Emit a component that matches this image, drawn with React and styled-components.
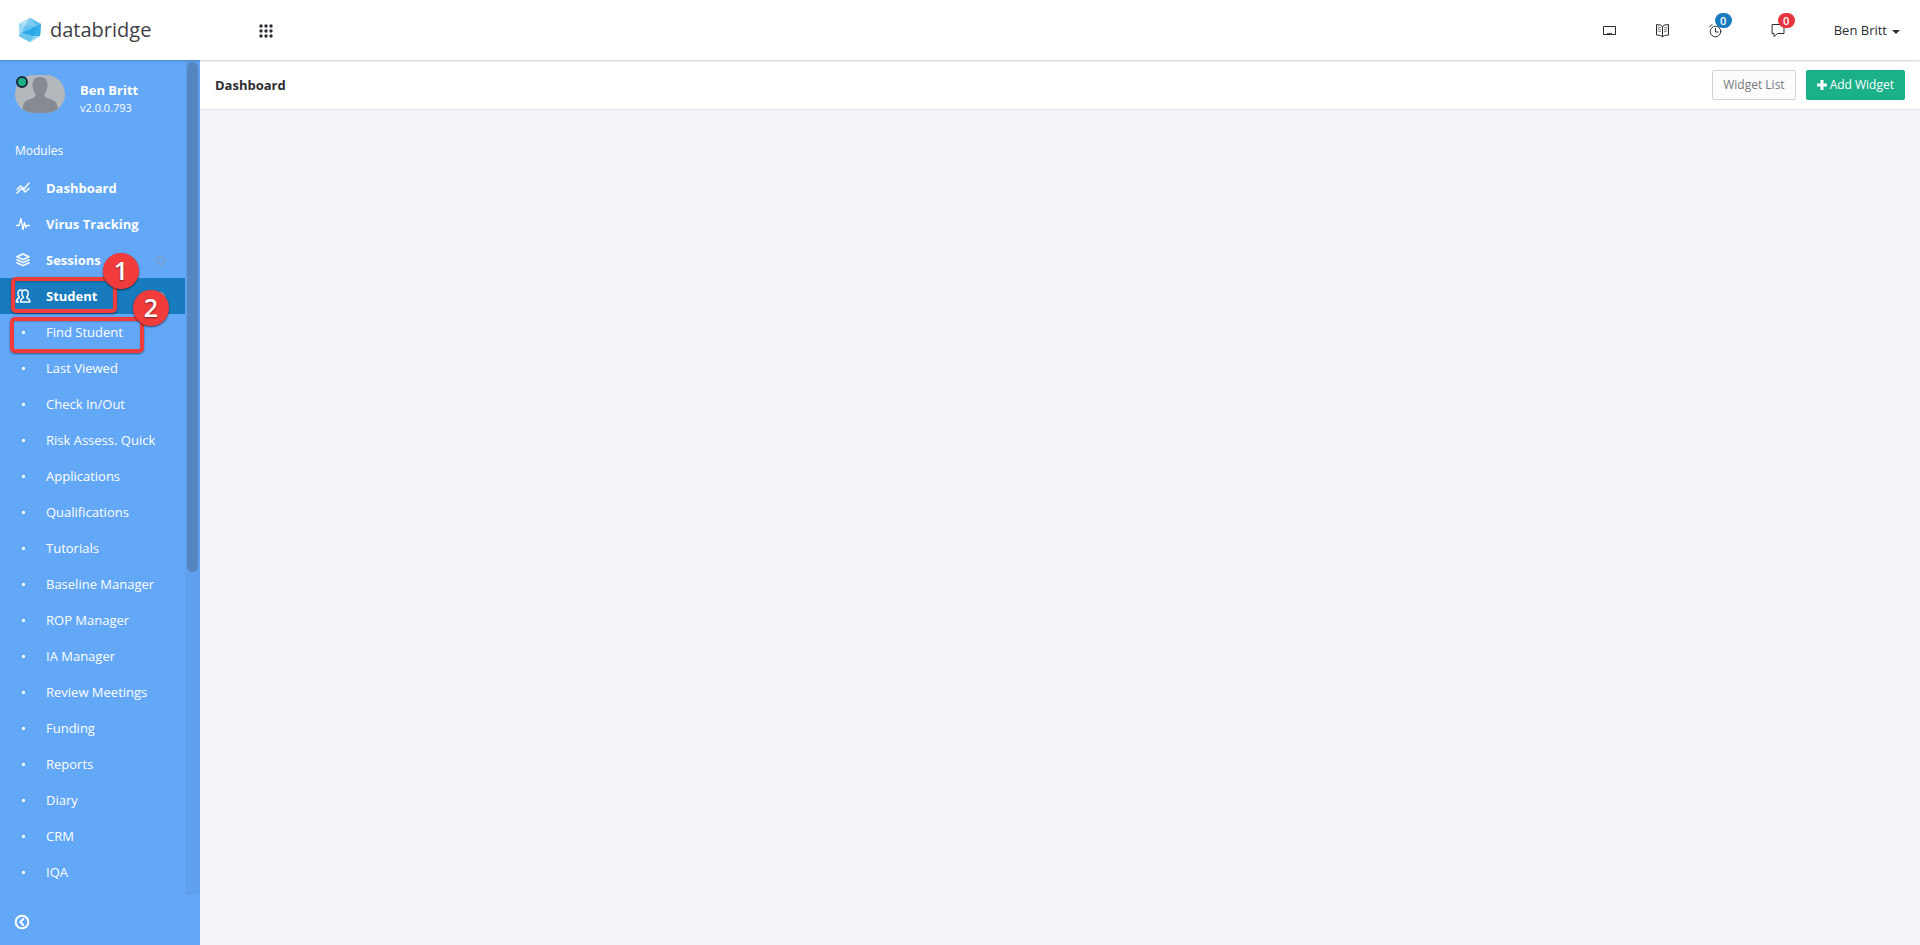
import styled, { createGlobalStyle, css } from "styled-components"

const GlobalStyle = createGlobalStyle`
    * {
        box-sizing: border-box;
    }
    body {
        margin: 0;
        background: #f2f4f8;
        color: #2c2d33;
        font-family: "Open Sans", "Noto Sans", sans-serif;
        font-size: 13px;
        line-height: 20px;
    }
    a {
        color: inherit;
        text-decoration: none;
    }
    button {
        font-family: inherit;
        cursor: pointer;
    }
`

const Page = styled.div`
    height: 100vh;
    display: flex;
    flex-direction: column;
`

const Header = styled.header`
    height: 60px;
    flex-shrink: 0;
    display: flex;
    align-items: center;
    padding: 0 20px 0 18px;
    background: white;
    position: relative;
    z-index: 2;
    box-shadow: 0 1px 2px rgba(0, 0, 0, 0.2);
`

const Brand = styled.a`
    display: flex;
    align-items: center;
    gap: 8px;
    width: 232px;
    font-size: 20px;
    line-height: 28px;
    color: #3f4047;
`

const IconButton = styled.button`
    display: flex;
    align-items: center;
    position: relative;
    width: ${({ $counted }) => $counted ? "42px" : "32px"};
    height: 32px;
    padding: 0 8px;
    border: 0;
    background: none;
    color: #2c2d33;
`

const Tools = styled.div`
    display: flex;
    align-items: center;
    gap: 21px;
    margin-left: auto;
`

const Count = styled.span`
    position: absolute;
    top: -1px;
    left: 16px;
    width: 17px;
    height: 15px;
    border-radius: 8px;
    background: ${({ $color }) => $color};
    color: white;
    font-size: 11px;
    line-height: 15px;
    font-weight: 600;
    text-align: center;
`

const UserMenu = styled.button`
    display: flex;
    align-items: center;
    gap: 5px;
    margin-left: 9px;
    padding: 0;
    border: 0;
    background: none;
    color: #2c2d33;
    font-size: 13px;
    line-height: 20px;
`

const Caret = styled.span`
    margin-top: 3px;
    border: 4px solid transparent;
    border-top-color: currentColor;
    border-bottom: 0;
`

const Body = styled.div`
    flex: 1;
    min-height: 0;
    display: flex;
`

const Sidebar = styled.aside`
    width: 200px;
    flex-shrink: 0;
    display: flex;
    flex-direction: column;
    background: #63a7f7;
    color: white;
`

const Scroller = styled.div`
    flex: 1;
    min-height: 0;
    display: flex;
`

const ScrollContent = styled.div`
    flex: 1;
    overflow: hidden;
`

const Track = styled.div`
    display: flex;
    flex-direction: column;
    width: 15px;
    padding: 2px;
    background: #5fa1ee;

    &::after {
        content: "";
        flex: 321;
    }
`

const Thumb = styled.div`
    flex: 510;
    border-radius: 6px;
    background: #5485be;
`

const Profile = styled.div`
    display: flex;
    gap: 15px;
    padding: 15px 15px 0;
    height: 81px;
`

const Avatar = styled.div`
    position: relative;
    width: 50px;
    height: 38px;

    svg {
        display: block;
        border-radius: 19px;
    }
`

const Online = styled.span`
    position: absolute;
    top: 1px;
    left: 1px;
    width: 12px;
    height: 12px;
    border: 2px solid #1c2833;
    border-radius: 50%;
    background: #1ab088;
`

const ProfileText = styled.div`
    padding-top: 6px;
    line-height: 18px;
`

const Name = styled.div`
    font-weight: 700;
`

const Version = styled.div`
    font-size: 11px;
`

const MenuTitle = styled.div`
    padding: 0 15px 9px;
    font-size: 12px;
`

const Menu = styled.ul`
    margin: 0;
    padding: 0;
    list-style: none;
`

const Item = styled.li`
    position: relative;
    ${({ $active }) => $active && css`
        background: #187bbd;
    `}
`

const ItemLink = styled.a`
    display: flex;
    align-items: center;
    height: 36px;
    padding: 0 20px 0 15px;
    font-weight: ${({ $bold }) => $bold ? 700 : 400};
`

const ItemIcon = styled.span`
    display: flex;
    justify-content: center;
    width: 16px;
    margin-right: 15px;
`

const Dot = styled.span`
    width: 3px;
    height: 3px;
    border-radius: 1px;
    background: white;
`

const Ring = styled.span`
    width: 9px;
    height: 9px;
    flex-shrink: 0;
    margin-left: auto;
    border: 1px solid #8a97a8;
    border-radius: 50%;
    background: ${({ $filled }) => $filled ? "#8a97a8" : "none"};
`

const Outline = styled.span`
    position: absolute;
    top: ${({ $top }) => $top}px;
    left: ${({ $left }) => $left}px;
    width: ${({ $width }) => $width}px;
    height: 36px;
    border: 4px solid #f23c3c;
    border-radius: 5px;
    box-shadow: 0 1px 2px rgba(0, 0, 0, 0.5), inset 0 1px 1px rgba(0, 0, 0, 0.2);
    pointer-events: none;
`

const Step = styled.span`
    position: absolute;
    z-index: 1;
    top: ${({ $top }) => $top}px;
    left: ${({ $left }) => $left}px;
    width: 36px;
    height: 36px;
    border-radius: 50%;
    background: #f23c3c;
    box-shadow: 0 1px 2px rgba(0, 0, 0, 0.6);
    color: white;
    font-size: 25px;
    line-height: 35px;
    font-weight: 600;
    text-align: center;
    text-shadow: 0 1px 2px rgba(0, 0, 0, 0.5);
    pointer-events: none;
`

const SidebarFooter = styled.div`
    height: 50px;
    padding: 11px 6px;
    button {
        color: white;
    }
`

const Main = styled.main`
    flex: 1;
`

const TitleBar = styled.div`
    display: flex;
    align-items: center;
    gap: 10px;
    height: 50px;
    padding: 1px 15px 0;
    background: white;
    border-bottom: 1px solid #e0e3e8;
`

const Title = styled.h1`
    flex: 1;
    margin: 0;
    font-size: 13px;
    line-height: 20px;
    font-weight: 700;
`

const Button = styled.button`
    display: flex;
    align-items: center;
    gap: 3px;
    height: 30px;
    padding: 0 10px;
    border: 1px solid ${({ $primary }) => $primary ? "#1ab088" : "#ced6dd"};
    border-radius: 2px;
    background: ${({ $primary }) => $primary ? "#1ab088" : "#fcfcfc"};
    color: ${({ $primary }) => $primary ? "white" : "#76797f"};
    font-size: 12px;
    line-height: 18px;
`

const Svg = ({ size = 16, box = 16, children, ...rest }) => (
    <svg width={size} height={size} viewBox={`0 0 ${box} ${box}`} fill="none" stroke="currentColor" strokeLinecap="round" strokeLinejoin="round" aria-hidden="true" {...rest}>
        {children}
    </svg>
)

const Logo = () => (
    <svg width="24" height="26" viewBox="0 0 24 26" aria-hidden="true">
        <path d="M12 1 23 7 22 19 12 25 1 19 1 7Z" fill="#43b4ec" />
        <path d="M12 1 1 7 7 9Z" fill="#b5e2f9" />
        <path d="M12 1 7 9 19 9Z" fill="#7dcdf3" />
        <path d="M12 1 23 7 19 9Z" fill="#5fc0ef" />
        <path d="M1 7 7 9 4 16 1 19Z" fill="#9bd8f5" />
        <path d="M7 9 19 9 4 16Z" fill="#64c2ef" />
        <path d="M19 9 4 16 16 19Z" fill="#28a8e6" />
        <path d="M19 9 23 7 22 19 16 19Z" fill="#37aee8" />
        <path d="M4 16 16 19 12 25 1 19Z" fill="#69c4ef" />
        <path d="M16 19 22 19 12 25Z" fill="#a1daf5" />
    </svg>
)

const GridIcon = () => (
    <Svg stroke="none" fill="currentColor">
        {[4, 9, 14].map((y) => [3, 8, 13].map((x) => <circle key={`${x}-${y}`} cx={x} cy={y} r="1.7" />))}
    </Svg>
)

const ScreenIcon = () => (
    <Svg>
        <path d="M2.500 4.500h12v8h-12zM2 12.500h13M6 11.700h5" strokeLinecap="butt" />
    </Svg>
)

const BookIcon = () => (
    <Svg>
        <path d="M8.500 4.500 6.500 3 2.500 2.500v10.500l4 .5 2 1.300 2-1.300 4-.5V2.500l-4 .5ZM8.500 4.500v10" />
        <path d="M4 5 6.700 5.700M4 7 6.700 7.700M4 9 6.700 9.700M13 5 10.300 5.700M13 7 10.300 7.700M13 9 10.300 9.700" strokeWidth=".6" />
    </Svg>
)

const ClockIcon = () => (
    <Svg>
        <circle cx="8.500" cy="9.500" r="5.300" />
        <path d="M8.500 6.500v3.500h2.500M2.500 5 5 2.500M12 2.500 14.500 5" />
    </Svg>
)

const ChatIcon = () => (
    <Svg>
        <path d="M2.500 2.500h11.500v9H7.500l-3.500 3v-3H2.500z" />
    </Svg>
)

// two lines, the upper one jagged and crossing the lower
const TrendIcon = () => (
    <Svg>
        <path d="M2 9.500 5.500 6l2 1.500L9 9l5-6M2 13l5-5M7 8l3 4 4-3.500" strokeWidth="1.500" />
    </Svg>
)

const PulseIcon = () => (
    <Svg>
        <path d="M1.500 9.500H4L6 2.500l2 11L9.500 6.500l1.500 5 1-2h2.500" strokeWidth="1.300" />
    </Svg>
)

const LayersIcon = () => (
    <Svg>
        <path d="M8 2 14 4.800 8 7.600 2 4.800ZM2 7.800l6 2.800 6-2.800M2 10.800l6 2.800 6-2.800" strokeWidth="1.600" />
    </Svg>
)

const PeopleIcon = () => (
    <Svg>
        <path d="M10 2c2.200 0 3.200 1.600 3.200 3.500 0 1.400-.6 2.500-1.300 3.200v1.200c1.700.6 3 1.500 3 4.100H5.500c0-2.600 1.100-3.500 2.700-4.100V8.700C7.500 8 6.900 6.900 6.900 5.500 6.900 3.600 7.900 2 10 2Z" strokeWidth="1.500" />
        <path d="M6.500 2C4 1.500 2.800 3.500 3 5.500c0 1.400.5 2.500 1.200 3.200v1C2.500 10.400 1.400 11.400 1.400 14h2" strokeWidth="1.500" />
    </Svg>
)

const PlusIcon = () => (
    <Svg size={10} box={10}>
        <path d="M5 0v10M0 5h10" strokeWidth="3" strokeLinecap="butt" />
    </Svg>
)

const CollapseIcon = () => (
    <Svg>
        <circle cx="8" cy="8" r="6.300" strokeWidth="2" />
        <path d="M9.300 5 6.300 8l3 3" strokeWidth="2" />
    </Svg>
)

const modules = [
    { label: "Dashboard", icon: <TrendIcon /> },
    { label: "Virus Tracking", icon: <PulseIcon /> },
    { label: "Sessions", icon: <LayersIcon />, ring: true },
    { label: "Student", icon: <PeopleIcon />, ring: true, active: true, mark: { step: 1, box: [-1, 11, 106], badge: [-25, 103] } },
    { label: "Find Student", mark: { step: 2, box: [3, 10, 134], badge: [-24, 133] } },
    ...["Last Viewed", "Check In/Out", "Risk Assess. Quick", "Applications", "Qualifications", "Tutorials", "Baseline Manager", "ROP Manager", "IA Manager", "Review Meetings", "Funding", "Reports", "Diary", "CRM", "IQA"].map((label) => ({ label })),
]

const MenuItem = ({ item }) => (
    <Item $active={item.active}>
        <ItemLink href="#" $bold={!!item.icon}>
            <ItemIcon>{item.icon || <Dot />}</ItemIcon>
            {item.label}
            {item.ring && <Ring $filled={item.active} />}
        </ItemLink>
        {item.mark && (
            <>
                <Outline $top={item.mark.box[0]} $left={item.mark.box[1]} $width={item.mark.box[2]} />
                <Step $top={item.mark.badge[0]} $left={item.mark.badge[1]}>{item.mark.step}</Step>
            </>
        )}
    </Item>
)

export default function App() {
    return (
        <Page>
            <GlobalStyle />
            <Header>
                <Brand href="#"><Logo />databridge</Brand>
                <IconButton aria-label="Apps"><GridIcon /></IconButton>
                <Tools>
                    <IconButton aria-label="Screen"><ScreenIcon /></IconButton>
                    <IconButton aria-label="Guide"><BookIcon /></IconButton>
                    <IconButton $counted aria-label="Reminders"><ClockIcon /><Count $color="#187bbd">0</Count></IconButton>
                    <IconButton $counted aria-label="Messages"><ChatIcon /><Count $color="#e5343d">0</Count></IconButton>
                    <UserMenu>Ben Britt<Caret /></UserMenu>
                </Tools>
            </Header>
            <Body>
                <Sidebar>
                    <Scroller>
                        <ScrollContent>
                            <Profile>
                                <Avatar>
                                    <svg width="50" height="38" viewBox="0 0 50 38" aria-hidden="true">
                                        <path d="M0 0h50v38H0z" fill="#b4b8bd" />
                                        <path d="M25 2c5 0 8 3 7.500 9-.3 4-1.500 6-3 8 0 3 1 3.500 4 4.500 6 2 8 3 9 8l1 6.500H7l1-6.500c1-5 3-6 8.500-8 3-1 4-1.500 4-4.500-1.500-2-2.700-4-3-8C17 5 20 2 25 2Z" fill="#868b91" />
                                    </svg>
                                    <Online />
                                </Avatar>
                                <ProfileText>
                                    <Name>Ben Britt</Name>
                                    <Version>v2.0.0.793</Version>
                                </ProfileText>
                            </Profile>
                            <MenuTitle>Modules</MenuTitle>
                            <Menu>
                                {modules.map((item) => <MenuItem key={item.label} item={item} />)}
                            </Menu>
                        </ScrollContent>
                        <Track><Thumb /></Track>
                    </Scroller>
                    <SidebarFooter>
                        <IconButton aria-label="Collapse menu"><CollapseIcon /></IconButton>
                    </SidebarFooter>
                </Sidebar>
                <Main>
                    <TitleBar>
                        <Title>Dashboard</Title>
                        <Button>Widget List</Button>
                        <Button $primary><PlusIcon />Add Widget</Button>
                    </TitleBar>
                </Main>
            </Body>
        </Page>
    )
}
